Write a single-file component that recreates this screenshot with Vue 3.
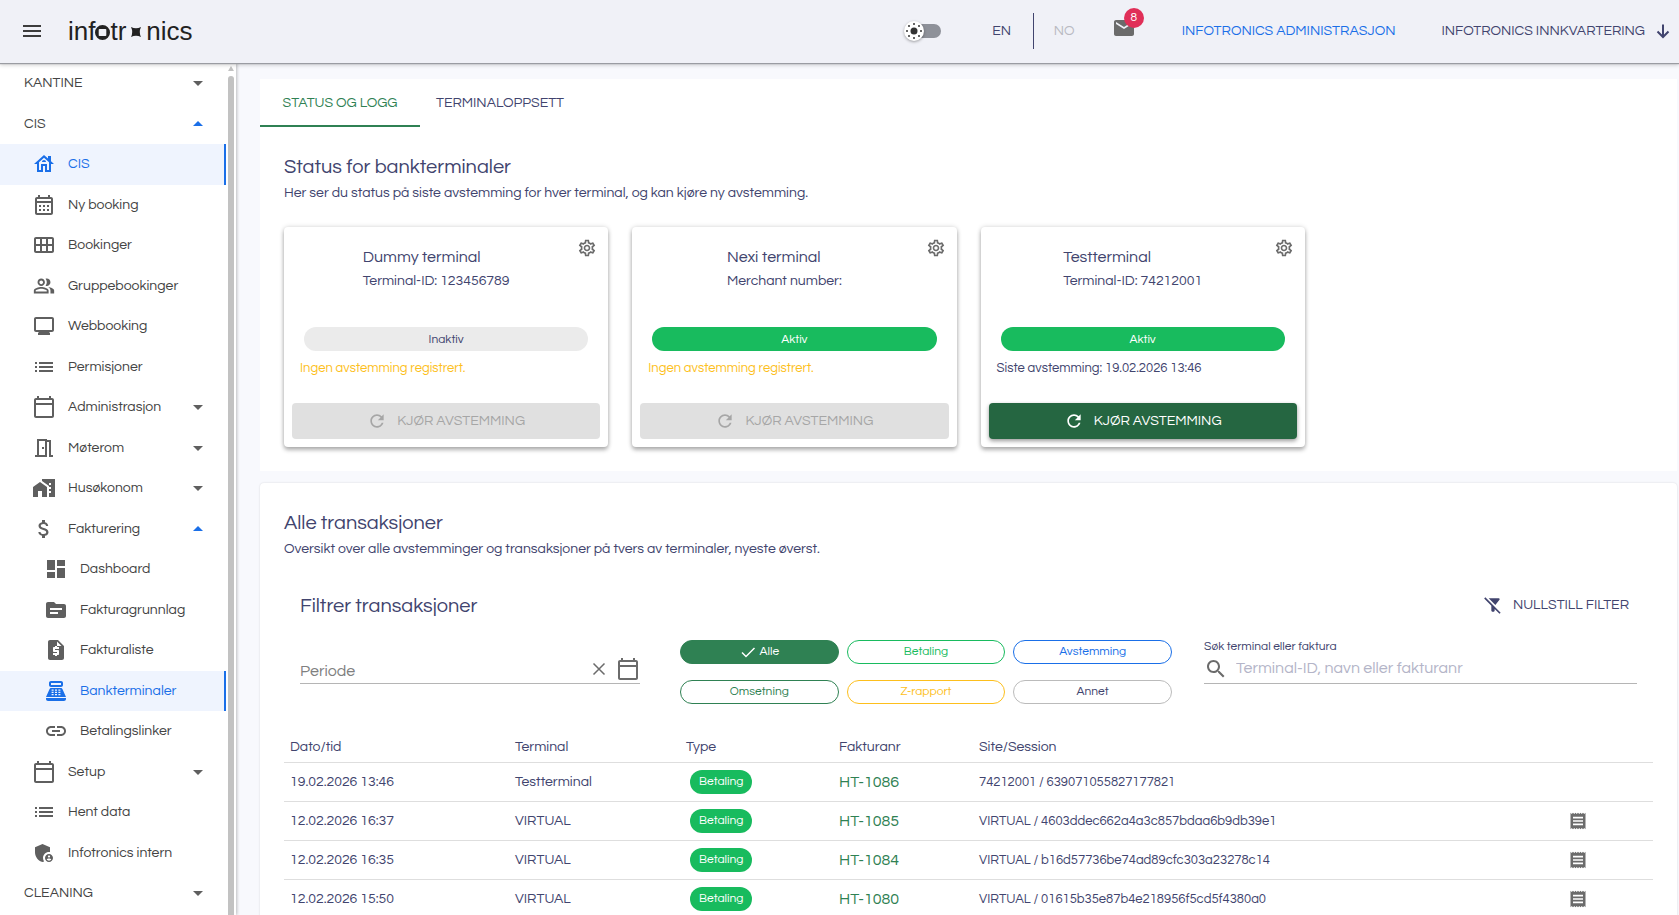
<template>
  <div class="layout">
    <header class="topbar">
      <button class="icon-btn menu-btn" aria-label="Meny">
        <svg class="icon" viewBox="0 0 24 24"><path :d="icons.menu" /></svg>
      </button>
      <a class="logo" href="#" aria-label="infotronics">
        <span>inf</span>
        <svg class="logo-ring" viewBox="0 0 15 15">
          <path fill-rule="evenodd" d="M7.5 0a7.5 7.5 0 1 0 0 15 7.5 7.5 0 0 0 0-15zM4.5 4h6q.8 0 .8.8v5.4q0 .8-.8.8h-6q-.8 0-.8-.8V4.800q0-.8.8-.8z" />
        </svg>
        <span>tr</span>
        <svg class="logo-star" viewBox="0 0 10 10">
          <path d="M0 0Q5 2.600 10 0 7.600 5 10 10 5 7.400 0 10 2.400 5 0 0z" />
        </svg>
        <span>nics</span>
      </a>

      <div class="topbar-right">
        <label class="theme-switch">
          <input v-model="dark" type="checkbox" aria-label="Mørkt tema" />
          <span class="track"></span>
          <span class="thumb">
            <svg viewBox="0 0 20 20">
              <circle cx="10" cy="10" r="3.5" />
              <circle v-for="(p, i) in sunRays" :key="i" :cx="p[0]" :cy="p[1]" r="1" />
            </svg>
          </span>
        </label>
        <div class="lang">
          <button class="lang-btn">EN</button>
          <button class="lang-btn" disabled>NO</button>
        </div>
        <button class="icon-btn mail" aria-label="Meldinger">
          <svg class="icon" viewBox="0 0 24 24"><path :d="icons.mail" /></svg>
          <span class="mail-count">8</span>
        </button>
        <a class="top-link primary" href="#">INFOTRONICS ADMINISTRASJON</a>
        <button class="top-link site">
          INFOTRONICS INNKVARTERING
          <svg class="stroke-icon" viewBox="0 0 16 16"><path d="M8 1.5v12M2.500 8.500 8 14l5.500-5.500" /></svg>
        </button>
      </div>
    </header>

    <div class="body">
      <aside class="sidebar">
        <nav>
          <a
            v-for="(item, i) in menu"
            :key="i"
            href="#"
            class="nav-item"
            :class="['level-' + item.level, { active: item.active }]"
          >
            <svg v-if="item.icon" class="icon" :viewBox="item.icon === 'people' ? '-1 -1 26 26' : '0 0 24 24'">
              <path :d="icons[item.icon]" />
            </svg>
            <span class="nav-label">{{ item.label }}</span>
            <svg v-if="item.toggle" class="icon caret" :class="item.toggle" viewBox="0 0 24 24">
              <path :d="item.toggle === 'open' ? 'M7 14l5-5 5 5z' : 'M7 10l5 5 5-5z'" />
            </svg>
          </a>
        </nav>
        <div class="scrollbar">
          <svg viewBox="0 0 6 5"><path d="M3 0l3 5H0z" /></svg>
          <span></span>
        </div>
      </aside>

      <main class="content">
        <section class="panel">
          <div class="tabs" role="tablist">
            <button
              v-for="tab in tabs"
              :key="tab"
              role="tab"
              class="tab"
              :class="{ selected: tab === activeTab }"
              @click="activeTab = tab"
            >
              {{ tab }}
            </button>
          </div>
          <div class="panel-body">
            <h2>Status for bankterminaler</h2>
            <p class="subtitle">Her ser du status på siste avstemming for hver terminal, og kan kjøre ny avstemming.</p>
            <div class="terminals">
              <article v-for="t in terminals" :key="t.name" class="terminal">
                <div class="terminal-head">
                  <div class="terminal-title">
                    <div>
                      <h3>{{ t.name }}</h3>
                      <p>{{ t.ident }}</p>
                    </div>
                  </div>
                  <button class="icon-btn gear" aria-label="Innstillinger">
                    <svg viewBox="0 0 24 24"><path :d="icons.gear" /></svg>
                  </button>
                </div>
                <span class="status" :class="{ on: t.active }">{{ t.active ? 'Aktiv' : 'Inaktiv' }}</span>
                <p class="note" :class="{ warn: !t.last }">
                  {{ t.last ? `Siste avstemming: ${t.last}` : 'Ingen avstemming registrert.' }}
                </p>
                <button class="run-btn" :disabled="!t.last">
                  <svg viewBox="0 0 24 24"><path :d="icons.refresh" /></svg>
                  KJØR AVSTEMMING
                </button>
              </article>
            </div>
          </div>
        </section>

        <section class="panel transactions">
          <div class="panel-body">
            <h2>Alle transaksjoner</h2>
            <p class="subtitle">Oversikt over alle avstemminger og transaksjoner på tvers av terminaler, nyeste øverst.</p>

            <div class="filter">
              <div class="filter-head">
                <h2>Filtrer transaksjoner</h2>
                <button class="reset-btn" @click="reset">
                  <svg viewBox="0 0 24 24"><path :d="icons.filterOff" /></svg>
                  NULLSTILL FILTER
                </button>
              </div>
              <div class="filter-row">
                <div class="field period">
                  <input v-model="period" type="text" placeholder="Periode" aria-label="Periode" />
                  <button class="icon-btn clear" aria-label="Tøm" @click="period = ''">
                    <svg class="stroke-icon" viewBox="0 0 16 16"><path d="M2.500 2.500l11 11M13.500 2.500l-11 11" /></svg>
                  </button>
                  <button class="icon-btn" aria-label="Velg dato">
                    <svg class="icon" viewBox="0 0 24 24"><path :d="icons.calendar" /></svg>
                  </button>
                </div>
                <div class="chips">
                  <button
                    v-for="type in types"
                    :key="type.label"
                    class="chip"
                    :class="[type.color, { picked: type.label === picked }]"
                    @click="picked = type.label"
                  >
                    <svg v-if="type.label === picked" class="stroke-icon" viewBox="0 0 16 16"><path d="M2 8.500l4 4 8.500-8.500" /></svg>
                    {{ type.label }}
                  </button>
                </div>
                <div class="search">
                  <label for="search">Søk terminal eller faktura</label>
                  <div class="field">
                    <svg class="icon" viewBox="0 0 24 24"><path :d="icons.search" /></svg>
                    <input id="search" v-model="query" type="text" placeholder="Terminal-ID, navn eller fakturanr" />
                  </div>
                </div>
              </div>
            </div>

            <table>
              <thead>
                <tr>
                  <th class="c-date">Dato/tid</th>
                  <th class="c-terminal">Terminal</th>
                  <th class="c-type">Type</th>
                  <th class="c-invoice">Fakturanr</th>
                  <th>Site/Session</th>
                  <th class="c-receipt"></th>
                </tr>
              </thead>
              <tbody>
                <tr v-for="row in rows" :key="row.invoice">
                  <td>{{ row.date }}</td>
                  <td>{{ row.terminal }}</td>
                  <td><span class="badge">Betaling</span></td>
                  <td><a class="invoice" href="#">{{ row.invoice }}</a></td>
                  <td class="session">{{ row.site }} / {{ row.session }}</td>
                  <td>
                    <button v-if="row.site === 'VIRTUAL'" class="icon-btn receipt" aria-label="Kvittering">
                      <svg viewBox="0 0 24 24"><path :d="icons.receipt" /></svg>
                    </button>
                  </td>
                </tr>
              </tbody>
            </table>
          </div>
        </section>
      </main>
    </div>
  </div>
</template>

<script setup>
import { ref } from 'vue'

const dark = ref(false)
const activeTab = ref('STATUS OG LOGG')
const period = ref('')
const query = ref('')
const picked = ref('Alle')

const tabs = ['STATUS OG LOGG', 'TERMINALOPPSETT']

const sunRays = [[10, 3], [15, 5], [17, 10], [15, 15], [10, 17], [5, 15], [3, 10], [5, 5]]

// keypad of the cash register, wound the other way so it is cut out of the body
const keypad = [7.6, 11, 14.4]
  .flatMap((x) => [10.4, 12.7, 15].map((y) => `M${x} ${y}h2v1.300h-2z`))
  .join('')

const icons = {
  menu: 'M3 18h18v-2H3v2zm0-5h18v-2H3v2zm0-7v2h18V6H3z',
  mail: 'M20 4H4c-1.100 0-1.990.9-1.990 2L2 18c0 1.100.9 2 2 2h16c1.100 0 2-.9 2-2V6c0-1.100-.9-2-2-2zm0 4l-8 5-8-5V6l8 5 8-5v2z',
  house: 'M19 9.300V4h-3v2.600L12 3 2 12h3v8h6v-6h2v6h6v-8h3L19 9.300zM17 18h-2v-6H9v6H7v-7.810l5-4.500 5 4.500V18zM10 10h4c0-1.100-.9-2-2-2s-2 .9-2 2z',
  month: 'M19 4h-1V2h-2v2H8V2H6v2H5c-1.110 0-1.990.9-1.990 2L3 20c0 1.100.89 2 2 2h14c1.100 0 2-.9 2-2V6c0-1.100-.9-2-2-2zm0 16H5V10h14v10zm0-12H5V6h14v2zM9 14H7v-2h2v2zm4 0h-2v-2h2v2zm4 0h-2v-2h2v2zm-8 4H7v-2h2v2zm4 0h-2v-2h2v2zm4 0h-2v-2h2v2z',
  grid: 'M20 4H4c-1.100 0-2 .9-2 2v12c0 1.100.9 2 2 2h16c1.100 0 2-.9 2-2V6c0-1.100-.9-2-2-2zM8 11H4V6h4v5zm6 0h-4V6h4v5zm6 0h-4V6h4v5zM8 18H4v-5h4v5zm6 0h-4v-5h4v5zm6 0h-4v-5h4v5z',
  people: 'M16.670 13.130C18.040 14.060 19 15.320 19 17v3h4v-3c0-2.180-3.570-3.470-6.330-3.870zM15 12c2.210 0 4-1.790 4-4s-1.790-4-4-4c-.47 0-.91.1-1.330.24C14.500 5.270 15 6.580 15 8s-.5 2.730-1.330 3.760c.42.14.86.24 1.330.24zM9 12c2.210 0 4-1.790 4-4s-1.790-4-4-4-4 1.790-4 4 1.790 4 4 4zm0-6c1.100 0 2 .9 2 2s-.9 2-2 2-2-.9-2-2 .9-2 2-2zM9 13c-2.670 0-8 1.340-8 4v3h16v-3c0-2.660-5.330-4-8-4zm6 5H3v-.99C3.200 16.290 6.300 15 9 15s5.800 1.290 6 2v1z',
  monitor: 'M20 3H4c-1.100 0-2 .9-2 2v11c0 1.100.9 2 2 2h3l-1 1v2h12v-2l-1-1h3c1.100 0 2-.9 2-2V5c0-1.100-.9-2-2-2zm0 13H4V5h16v11z',
  list: 'M3 9h2V7H3v2zm0 8h2v-2H3v2zm0-4h2v-2H3v2zm4 0h14v-2H7v2zm0 4h14v-2H7v2zM7 7v2h14V7H7z',
  calendar: 'M20 3h-1V1h-2v2H7V1H5v2H4c-1.100 0-2 .9-2 2v16c0 1.100.9 2 2 2h16c1.100 0 2-.9 2-2V5c0-1.100-.9-2-2-2zm0 18H4V10h16v11zm0-13H4V5h16v3z',
  door: 'M19 19V4h-4V3H5v16H3v2h12V6h2v15h4v-2h-2zm-6 0H7V5h6v14zm-3-8h2v2h-2z',
  homeWork: 'M1 11v10h5v-6h4v6h5V11L8 6zM10 3v1.970l7 5V11h2v2h-2v2h2v2h-2v4h6V3H10zm9 6h-2V7h2v2z',
  dollar: 'M11.800 10.900c-2.270-.59-3-1.200-3-2.150 0-1.090 1.010-1.850 2.700-1.850 1.780 0 2.440.85 2.500 2.100h2.210c-.07-1.720-1.120-3.300-3.210-3.810V3h-3v2.160c-1.940.42-3.500 1.680-3.500 3.610 0 2.310 1.910 3.460 4.700 4.130 2.500.6 3 1.480 3 2.410 0 .69-.49 1.790-2.700 1.790-2.060 0-2.870-.92-2.980-2.100h-2.200c.12 2.190 1.760 3.420 3.680 3.830V21h3v-2.150c1.950-.37 3.500-1.500 3.500-3.550 0-2.840-2.430-3.810-4.700-4.400z',
  dashboard: 'M3 13h8V3H3v10zm0 8h8v-6H3v6zm10 0h8V11h-8v10zm0-18v6h8V3h-8z',
  folder: 'M20 6h-8l-2-2H4c-1.100 0-1.990.9-1.990 2L2 18c0 1.100.9 2 2 2h16c1.100 0 2-.9 2-2V8c0-1.100-.9-2-2-2zm-6 10H6v-2h8v2zm4-4H6v-2h12v2z',
  quote: 'M14 2H6c-1.100 0-1.990.9-1.990 2L4 20c0 1.100.89 2 1.990 2H18c1.100 0 2-.9 2-2V8l-6-6zm1 9h-4v1h3c.55 0 1 .45 1 1v3c0 .55-.45 1-1 1h-1v1h-2v-1H9v-2h4v-1h-3c-.55 0-1-.45-1-1v-3c0-.55.45-1 1-1h1V8h2v1h2v2zm-2-3V3.500L17.500 8H13z',
  register: 'M17 2H7c-1.100 0-2 .9-2 2v2c0 1.100.9 2 2 2h10c1.100 0 2-.9 2-2V4c0-1.100-.9-2-2-2zm0 4H7V4h10v2zm3 16H4c-1.100 0-2-.9-2-2v-1h20v1c0 1.100-.9 2-2 2zm-1.470-11.810C18.210 9.470 17.490 9 16.700 9H7.300c-.79 0-1.510.47-1.830 1.190L2 18h20l-3.470-7.810z' + keypad,
  link: 'M3.900 12c0-1.710 1.390-3.100 3.100-3.100h4V7H7c-2.760 0-5 2.240-5 5s2.240 5 5 5h4v-1.900H7c-1.710 0-3.100-1.390-3.100-3.100zM8 13h8v-2H8v2zm9-6h-4v1.900h4c1.710 0 3.100 1.390 3.100 3.100s-1.390 3.100-3.100 3.100h-4V17h4c2.760 0 5-2.240 5-5s-2.240-5-5-5z',
  shield: 'M17 11c.34 0 .67.04 1 .09V6.270L10.500 3 3 6.270v4.910c0 4.540 3.200 8.790 7.500 9.820.55-.13 1.080-.32 1.600-.55-.69-.98-1.100-2.170-1.100-3.450 0-3.310 2.690-6 6-6zM17 13c-2.210 0-4 1.790-4 4s1.790 4 4 4 4-1.790 4-4-1.790-4-4-4zm0 1.380c.62 0 1.120.51 1.120 1.120s-.51 1.120-1.120 1.120-1.120-.51-1.120-1.120.5-1.120 1.120-1.120zm0 5.370c-.93 0-1.740-.46-2.240-1.170.05-.72 1.510-1.080 2.240-1.080s2.190.36 2.240 1.080c-.5.71-1.310 1.170-2.240 1.170z',
  gear: 'M19.430 12.980c.04-.32.07-.64.07-.98s-.03-.66-.07-.98l2.110-1.650c.19-.15.24-.42.12-.64l-2-3.460c-.09-.16-.26-.25-.44-.25-.06 0-.12.01-.17.03l-2.490 1c-.52-.4-1.080-.73-1.690-.98l-.38-2.650C14.460 2.180 14.250 2 14 2h-4c-.25 0-.46.18-.49.42l-.38 2.650c-.61.25-1.170.59-1.690.98l-2.490-1c-.06-.02-.12-.03-.18-.03-.17 0-.34.09-.43.25l-2 3.460c-.13.22-.07.49.12.64l2.110 1.650c-.04.32-.07.65-.07.98s.03.66.07.98l-2.110 1.650c-.19.15-.24.42-.12.64l2 3.460c.09.16.26.25.44.25.06 0 .12-.01.17-.03l2.490-1c.52.4 1.080.73 1.690.98l.38 2.650c.03.24.24.42.49.42h4c.25 0 .46-.18.49-.42l.38-2.650c.61-.25 1.170-.59 1.690-.98l2.490 1c.06.02.12.03.18.03.17 0 .34-.09.43-.25l2-3.460c.12-.22.07-.49-.12-.64l-2.110-1.650zm-1.980-1.710c.04.31.05.52.05.73s-.02.43-.05.73l-.14 1.130.89.7 1.080.84-.7 1.210-1.270-.51-1.040-.42-.9.68c-.43.32-.84.56-1.250.73l-1.060.43-.16 1.130-.2 1.350h-1.400l-.19-1.350-.16-1.130-1.060-.43c-.43-.18-.83-.41-1.230-.71l-.91-.7-1.060.43-1.270.51-.7-1.210 1.080-.84.89-.7-.14-1.130c-.03-.31-.05-.54-.05-.74s.02-.43.05-.73l.14-1.130-.89-.7-1.080-.84.7-1.210 1.270.51 1.040.42.9-.68c.43-.32.84-.56 1.250-.73l1.060-.43.16-1.130.2-1.350h1.390l.19 1.350.16 1.130 1.060.43c.43.18.83.41 1.230.71l.91.7 1.060-.43 1.270-.51.7 1.210-1.070.85-.89.7.14 1.130zM12 8c-2.210 0-4 1.790-4 4s1.790 4 4 4 4-1.790 4-4-1.790-4-4-4zm0 6c-1.100 0-2-.9-2-2s.9-2 2-2 2 .9 2 2-.9 2-2 2z',
  refresh: 'M17.650 6.350C16.200 4.900 14.210 4 12 4c-4.420 0-7.990 3.580-7.990 8s3.570 8 7.990 8c3.730 0 6.840-2.550 7.730-6h-2.080c-.82 2.330-3.040 4-5.650 4-3.310 0-6-2.690-6-6s2.690-6 6-6c1.660 0 3.140.69 4.220 1.780L13 11h7V4l-2.350 2.350z',
  filterOff: 'M19.790 5.610C20.300 4.950 19.830 4 19 4H6.830l7.970 7.970 4.990-6.360zM2.810 2.810 1.390 4.220 10 13v6c0 .55.45 1 1 1h2c.55 0 1-.45 1-1v-2.170l5.780 5.780 1.410-1.410L2.810 2.810z',
  search: 'M15.500 14h-.79l-.28-.27C15.410 12.590 16 11.110 16 9.500 16 5.910 13.090 3 9.500 3S3 5.910 3 9.500 5.910 16 9.500 16c1.610 0 3.090-.59 4.230-1.570l.27.28v.79l5 4.990L20.490 19l-4.990-5zm-6 0C7.010 14 5 11.990 5 9.500S7.010 5 9.500 5 14 7.010 14 9.500 11.990 14 9.500 14z',
  receipt: 'M18 17H6v-2h12v2zm0-4H6v-2h12v2zm0-4H6V7h12v2zM3 22l1.500-1.500L6 22l1.500-1.500L9 22l1.500-1.500L12 22l1.500-1.500L15 22l1.500-1.500L18 22l1.500-1.500L21 22V2l-1.500 1.500L18 2l-1.500 1.500L15 2l-1.500 1.500L12 2l-1.500 1.500L9 2 7.500 3.500 6 2 4.500 3.500 3 2v20z'
}

const menu = [
  { label: 'KANTINE', level: 1, toggle: 'closed' },
  { label: 'CIS', level: 1, toggle: 'open' },
  { label: 'CIS', level: 2, icon: 'house', active: true },
  { label: 'Ny booking', level: 2, icon: 'month' },
  { label: 'Bookinger', level: 2, icon: 'grid' },
  { label: 'Gruppebookinger', level: 2, icon: 'people' },
  { label: 'Webbooking', level: 2, icon: 'monitor' },
  { label: 'Permisjoner', level: 2, icon: 'list' },
  { label: 'Administrasjon', level: 2, icon: 'calendar', toggle: 'closed' },
  { label: 'Møterom', level: 2, icon: 'door', toggle: 'closed' },
  { label: 'Husøkonom', level: 2, icon: 'homeWork', toggle: 'closed' },
  { label: 'Fakturering', level: 2, icon: 'dollar', toggle: 'open' },
  { label: 'Dashboard', level: 3, icon: 'dashboard' },
  { label: 'Fakturagrunnlag', level: 3, icon: 'folder' },
  { label: 'Fakturaliste', level: 3, icon: 'quote' },
  { label: 'Bankterminaler', level: 3, icon: 'register', active: true },
  { label: 'Betalingslinker', level: 3, icon: 'link' },
  { label: 'Setup', level: 2, icon: 'calendar', toggle: 'closed' },
  { label: 'Hent data', level: 2, icon: 'list' },
  { label: 'Infotronics intern', level: 2, icon: 'shield' },
  { label: 'CLEANING', level: 1, toggle: 'closed' }
]

const terminals = [
  { name: 'Dummy terminal', ident: 'Terminal-ID: 123456789', active: false },
  { name: 'Nexi terminal', ident: 'Merchant number:', active: true },
  { name: 'Testterminal', ident: 'Terminal-ID: 74212001', active: true, last: '19.02.2026 13:46' }
]

const types = [
  { label: 'Alle', color: 'forest' },
  { label: 'Betaling', color: 'green' },
  { label: 'Avstemming', color: 'blue' },
  { label: 'Omsetning', color: 'forest' },
  { label: 'Z-rapport', color: 'amber' },
  { label: 'Annet', color: 'grey' }
]

const rows = [
  { date: '19.02.2026 13:46', terminal: 'Testterminal', invoice: 'HT-1086', site: '74212001', session: '639071055827177821' },
  { date: '12.02.2026 16:37', terminal: 'VIRTUAL', invoice: 'HT-1085', site: 'VIRTUAL', session: '4603ddec662a4a3c857bdaa6b9db39e1' },
  { date: '12.02.2026 16:35', terminal: 'VIRTUAL', invoice: 'HT-1084', site: 'VIRTUAL', session: 'b16d57736be74ad89cfc303a23278c14' },
  { date: '12.02.2026 15:50', terminal: 'VIRTUAL', invoice: 'HT-1080', site: 'VIRTUAL', session: '01615b35e87b4e218956f5cd5f4380a0' }
]

const reset = () => {
  period.value = ''
  query.value = ''
  picked.value = 'Alle'
}
</script>

<style>
body {
  margin: 0;
  background: #f8f9fd;
}
</style>

<style scoped>
.layout {
  display: flex;
  flex-direction: column;
  height: 100vh;
  overflow: hidden;
  font-family: 'Questrial', 'Liberation Sans', Arial, sans-serif;
  font-size: 14px;
  color: #41446e;
}
.layout * {
  box-sizing: border-box;
}
button,
input {
  font: inherit;
  color: inherit;
  background: none;
  border: 0;
  padding: 0;
  outline: 0;
}
button {
  cursor: pointer;
}
a {
  color: inherit;
  text-decoration: none;
}
h2,
h3,
p {
  margin: 0;
  font-weight: 400;
}
svg {
  display: block;
  flex: none;
  fill: currentColor;
}
.icon {
  width: 24px;
  height: 24px;
}
.stroke-icon {
  width: 16px;
  height: 16px;
  fill: none;
  stroke: currentColor;
  stroke-width: 2;
}
.icon-btn {
  display: flex;
  color: #6b6b6b;
}

/* top bar */
.topbar {
  position: relative;
  z-index: 2;
  flex: none;
  display: flex;
  align-items: center;
  height: 63px;
  padding: 0 8px 2px 20px;
  background: #f0f1f7;
  box-shadow: 0 1px 1px #9a9ca2, 0 2px 4px rgba(0, 0, 0, 0.2);
}
.menu-btn {
  color: #3c3c3c;
}
.logo {
  display: flex;
  align-items: baseline;
  margin-left: 24px;
  font-family: 'Liberation Sans', Arial, sans-serif;
  font-size: 26px;
  line-height: 30px;
  color: #222;
}
.logo-ring {
  width: 15px;
  height: 15px;
}
.logo-star {
  align-self: center;
  width: 10px;
  height: 10px;
  margin: 2px 5px 0;
}
.topbar-right {
  display: flex;
  align-items: center;
  margin-left: auto;
}
.theme-switch {
  position: relative;
  display: flex;
  align-items: center;
  width: 37px;
  height: 20px;
}
.theme-switch input {
  position: absolute;
  opacity: 0;
}
.track {
  width: 34px;
  height: 14px;
  margin-left: 3px;
  border-radius: 7px;
  background: #8e9199;
}
.thumb {
  position: absolute;
  left: 0;
  top: 0;
  width: 20px;
  height: 20px;
  border-radius: 50%;
  background: #fff;
  color: #333;
  box-shadow: 0 1px 3px rgba(0, 0, 0, 0.35);
}
.theme-switch input:checked ~ .thumb {
  left: 17px;
}
.lang {
  display: flex;
  align-items: center;
  margin-left: 30px;
}
.lang-btn {
  width: 62px;
  height: 36px;
}
.lang-btn + .lang-btn {
  border-left: 1px solid #41446e;
  color: #b9bac2;
}
.mail {
  position: relative;
  margin: 0 46px 6px 17px;
}
.mail-count {
  position: absolute;
  left: 12px;
  top: -8px;
  width: 20px;
  height: 20px;
  border-radius: 50%;
  background: #e02f58;
  color: #fff;
  font-size: 12px;
  line-height: 20px;
  text-align: center;
}
.top-link.primary {
  color: #1a6fe8;
}
.site {
  display: flex;
  align-items: center;
  gap: 10px;
  margin-left: 46px;
}

/* sidebar */
.body {
  display: flex;
  flex: 1;
  min-height: 0;
}
.sidebar {
  position: relative;
  z-index: 1;
  flex: none;
  display: flex;
  gap: 2px;
  width: 236px;
  background: #fff;
  box-shadow: 1px 0 3px rgba(0, 0, 0, 0.25);
}
nav {
  flex: 1;
}
.nav-item {
  display: flex;
  align-items: center;
  padding: 8px 14px 8px 32px;
  border-right: 2px solid transparent;
  color: #444;
  line-height: 1.75;
}
.nav-item .icon {
  margin-right: 12px;
  color: #5f5f5f;
}
.nav-item.level-1 {
  padding-left: 24px;
}
.nav-item.level-3 {
  padding-left: 44px;
}
.nav-item.active {
  background: #eff4fe;
  border-color: #1a6fe8;
  color: #1a6fe8;
}
.nav-item.active .icon,
.nav-item .caret.open {
  color: #1a6fe8;
}
.nav-item .caret {
  margin: 0 0 0 auto;
}
.scrollbar {
  display: flex;
  flex-direction: column;
  gap: 5px;
  width: 8px;
  padding: 3px 2px 0 0;
  color: #c2c2c2;
}
.scrollbar svg {
  width: 6px;
  height: 5px;
}
.scrollbar span {
  flex: 1;
  border-radius: 3px 3px 0 0;
  background: #c2c2c2;
}

/* content */
.content {
  flex: 1;
  min-width: 0;
  padding: 16px 2px 0 24px;
  overflow-y: auto;
  scrollbar-width: none;
}
.panel {
  background: #fff;
}
.panel + .panel {
  margin-top: 12px;
}
.transactions {
  border-radius: 4px;
  box-shadow: 0 0 2px rgba(0, 0, 0, 0.15);
}
.tabs {
  display: flex;
}
.tab {
  min-width: 160px;
  height: 48px;
  padding-top: 2px;
  border-bottom: 2px solid transparent;
}
.tab.selected {
  border-color: #2f8153;
  color: #2f8153;
}
.panel-body {
  padding: 24px;
}
h2 {
  font-size: 20px;
  line-height: 32px;
}
.subtitle {
  line-height: 20px;
}
.terminals {
  display: grid;
  grid-template-columns: repeat(4, 1fr);
  gap: 24px;
  margin-top: 24px;
}
.terminal {
  display: flex;
  flex-direction: column;
  padding: 11px 8px 8px;
  border-radius: 4px;
  box-shadow: 0 3px 4px rgba(0, 0, 0, 0.28), 0 0 5px rgba(0, 0, 0, 0.16);
}
.terminal-head {
  display: flex;
  align-items: flex-start;
  padding: 0 3px;
}
.terminal-title {
  flex: 1;
  display: flex;
  justify-content: center;
  padding-top: 7px;
}
.terminal-title h3 {
  font-size: 16px;
  line-height: 24px;
}
.terminal-title p {
  line-height: 24px;
}
.gear svg,
.run-btn svg,
.reset-btn svg,
.receipt svg {
  width: 20px;
  height: 20px;
}
.status {
  margin: 34px 12px 0;
  padding-top: 1px;
  border-radius: 12px;
  background: #ebebeb;
  font-size: 12px;
  line-height: 23px;
  text-align: center;
}
.status.on {
  background: #18bb5e;
  color: #fff;
}
.note {
  margin: 8px 8px 26px;
  font-size: 13px;
  line-height: 18px;
}
.note.warn {
  color: #fdbf1d;
}
.run-btn {
  display: flex;
  align-items: center;
  justify-content: center;
  gap: 10px;
  height: 36px;
  border-radius: 4px;
  background: #256641;
  color: #fff;
  box-shadow: 0 2px 4px rgba(0, 0, 0, 0.4);
}
.run-btn:disabled {
  background: #e0e0e0;
  color: #a6a6a6;
  box-shadow: none;
  cursor: default;
}

/* filter */
.filter {
  margin-top: 15px;
  padding: 16px 16px 0;
}
.filter-head {
  display: flex;
  align-items: center;
  justify-content: space-between;
  padding-right: 8px;
}
.reset-btn {
  display: flex;
  align-items: center;
  gap: 10px;
  padding-bottom: 2px;
}
.filter-row {
  display: grid;
  grid-template-columns: 348fr 492fr 433fr;
  column-gap: 32px;
  align-items: start;
  margin-top: 18px;
}
.field {
  display: flex;
  align-items: center;
  height: 30px;
  border-bottom: 1px solid #b5b5b5;
  font-size: 16px;
}
.field input {
  flex: 1;
  min-width: 0;
}
.period {
  height: 44px;
  margin-right: 8px;
  padding-top: 15px;
}
.period input {
  padding-top: 4px;
}
.clear {
  margin-right: 9px;
}
.period .stroke-icon {
  stroke-width: 1.5;
}
.period input::placeholder {
  color: #808080;
  opacity: 1;
}
.chips {
  display: grid;
  grid-template-columns: repeat(3, 1fr);
  gap: 16px 8px;
}
.chip {
  display: flex;
  align-items: center;
  justify-content: center;
  gap: 4px;
  height: 24px;
  padding-bottom: 1px;
  border: 1px solid currentColor;
  border-radius: 12px;
  font-size: 12px;
}
.chip .stroke-icon {
  stroke-width: 1.5;
}
.chip.forest {
  color: #2f8153;
}
.chip.green {
  color: #18bb5e;
}
.chip.blue {
  color: #1a6fe8;
}
.chip.amber {
  color: #fdbf1d;
}
.chip.grey {
  border-color: #bbb;
}
.chip.picked {
  background: #2f8153;
  border-color: #2f8153;
  color: #fff;
}
.search label {
  display: block;
  font-size: 12px;
  line-height: 14px;
}
.search .icon {
  margin-right: 8px;
  color: #6b6b6b;
}
.search input {
  padding-bottom: 2px;
}
.search input::placeholder {
  color: #b4b5c8;
  opacity: 1;
}

/* table */
table {
  width: 100%;
  margin-top: 28px;
  border-collapse: separate;
  border-spacing: 0;
  table-layout: fixed;
}
th,
td {
  height: 39px;
  padding: 0 6px;
  border-bottom: 1px solid #dedede;
  font-weight: 400;
  text-align: left;
}
th {
  height: 31px;
}
.c-date {
  width: 225px;
}
.c-terminal {
  width: 171px;
}
.c-type {
  width: 153px;
}
.c-invoice {
  width: 140px;
}
.c-receipt {
  width: 91px;
}
.badge {
  display: inline-block;
  margin-left: 4px;
  padding: 0 9px;
  border-radius: 12px;
  background: #18bb5e;
  color: #fff;
  font-size: 12px;
  line-height: 24px;
}
.invoice {
  color: #2f8153;
  font-size: 16px;
}
.session {
  font-size: 13px;
}
</style>
